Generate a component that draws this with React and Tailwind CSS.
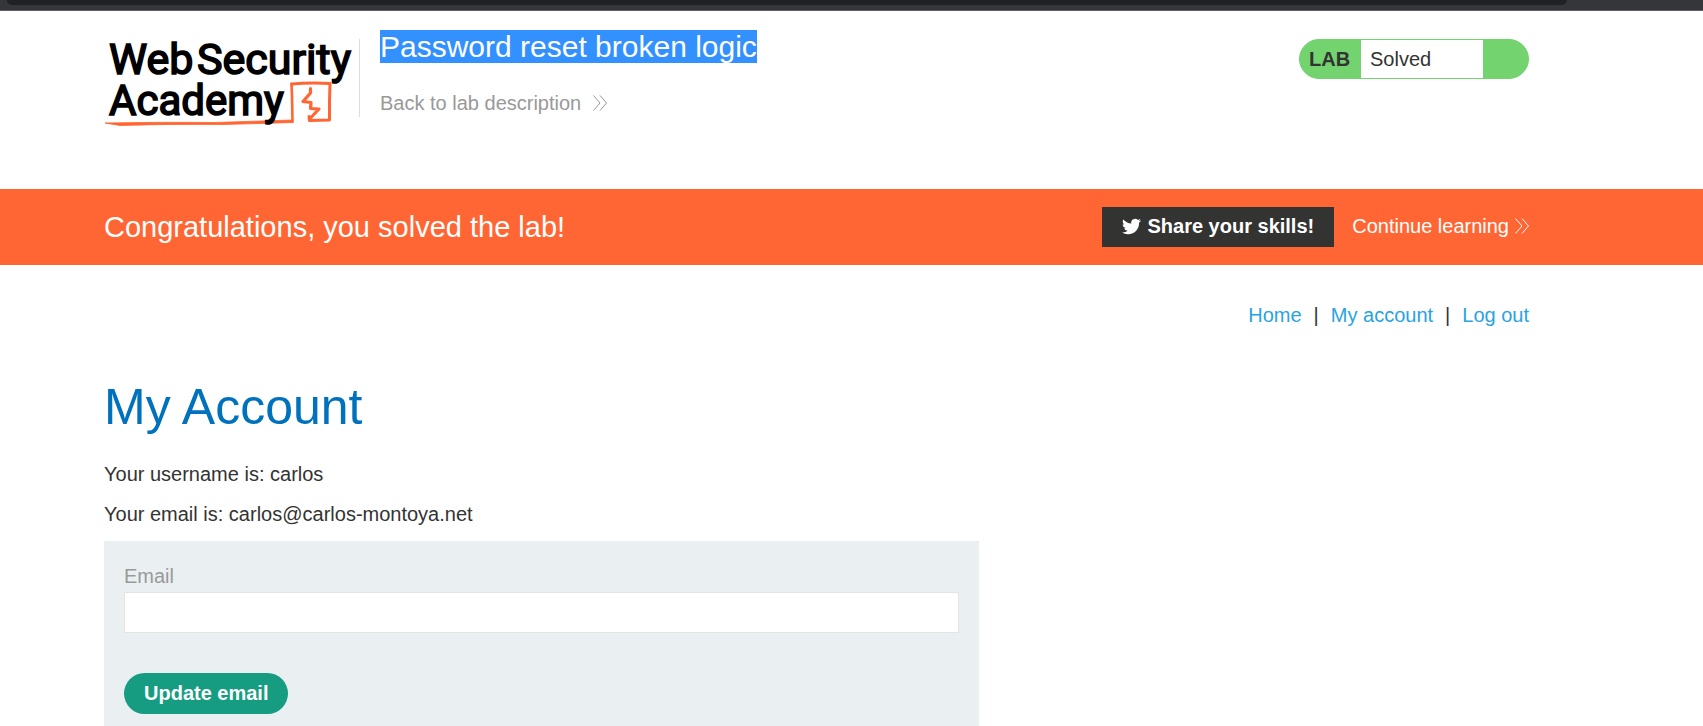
import React from "react";

function DoubleChevron({ className }) {
  return (
    <svg
      className={className}
      width="14"
      height="16"
      viewBox="0 0 14 16"
      fill="none"
      stroke="currentColor"
      strokeWidth="1"
      aria-hidden="true"
    >
      <path d="M0.5 0.5 L7 8 L0.5 15.5" />
      <path d="M7 0.5 L13.5 8 L7 15.5" />
    </svg>
  );
}

function TwitterBird() {
  return (
    <svg width="19" height="19" viewBox="0 0 24 24" fill="currentColor" aria-hidden="true">
      <path d="M23.953 4.57a10 10 0 01-2.825.775 4.958 4.958 0 002.163-2.723c-.951.555-2.005.959-3.127 1.184a4.92 4.92 0 00-8.384 4.482C7.69 8.095 4.067 6.13 1.64 3.162a4.822 4.822 0 00-.666 2.475c0 1.71.87 3.213 2.188 4.096a4.904 4.904 0 01-2.228-.616v.06a4.923 4.923 0 003.946 4.827 4.996 4.996 0 01-2.212.085 4.936 4.936 0 004.604 3.417 9.867 9.867 0 01-6.102 2.105c-.39 0-.779-.023-1.17-.067a13.995 13.995 0 007.557 2.209c9.053 0 13.998-7.496 13.998-13.985 0-.21 0-.42-.015-.63A9.935 9.935 0 0024 4.59z" />
    </svg>
  );
}

function Logo() {
  return (
    <svg width="252" height="104" viewBox="0 -6 252 104" aria-label="Web Security Academy">
      <g fill="none" stroke="#ff6633" strokeLinejoin="round" strokeLinecap="round">
        <path d="M188.500 85.500 L188 60 L187.500 48" strokeWidth="2.600" />
        <path d="M187.500 48 Q206 46.500 226 47.500 L225.500 65 L225.500 84 L205.500 84.500 L205 80.500" strokeWidth="3" />
        <path d="M206.500 52.500 L206.500 57 L199 65.500 L207 66.500 L206.500 72.500 L215 73 L205.500 83" strokeWidth="3.200" />
      </g>
      <path d="M1 87 Q60 86 110 86.500 L189 84 L189 86.500 L120 88.500 Q60 88 16 89.500 Z" fill="#ff6633" stroke="#ff6633" strokeWidth="0.800" />
      <g className="font-[Roboto,sans-serif] font-normal" fill="#000" stroke="#000" strokeWidth="1.600">
        <text x="5" y="38" className="text-[43px]">Web</text>
        <text x="93" y="38" className="text-[43px]">Security</text>
        <text x="5" y="79" className="text-[42px]">Academy</text>
      </g>
    </svg>
  );
}

function BrowserEdge() {
  return (
    <div className="h-[11px] border-b border-[#5f6063] bg-[#35363a] pl-[7px] pr-[136px]">
      <div className="h-[5px] rounded-b-xl bg-[#202124]" />
    </div>
  );
}

function Header() {
  return (
    <header className="flex h-[178px] w-full max-w-[1529px] items-start pl-[104px]">
      <a href="#academy" className="mt-[19px] block">
        <Logo />
      </a>
      <div className="ml-[3px] mt-7 h-[78px] w-px bg-[#dddddd]" />
      <div className="ml-5 mt-[19px]">
        <h2 className="text-[30px] leading-[33px] text-white">
          <span className="bg-[#3390ff]">Password reset broken logic</span>
        </h2>
        <a href="#description" className="mt-7 flex items-center text-[20px] leading-6 text-[#999999]">
          Back to lab description
          <DoubleChevron className="ml-3" />
        </a>
      </div>
      <div className="ml-auto mt-7 flex h-10 w-[230px] overflow-hidden rounded-[20px] border border-[#72d36f] bg-[#72d36f] text-[20px] leading-[38px] text-[#333332]">
        <span className="w-[61px] pl-[9px] font-bold">LAB</span>
        <span className="w-[122px] bg-white pl-[9px]">Solved</span>
      </div>
    </header>
  );
}

function Banner() {
  return (
    <section className="bg-[#ff6633] text-white">
      <div className="flex h-[76px] w-full max-w-[1529px] items-center pl-[104px]">
        <h4 className="text-[29px] leading-8">Congratulations, you solved the lab!</h4>
        <button
          type="button"
          className="ml-auto flex h-10 items-center gap-[6px] bg-[#333332] px-5 pb-[2px] text-[20px] font-bold"
        >
          <TwitterBird />
          Share your skills!
        </button>
        <a href="#continue" className="ml-[18px] flex items-center pb-[2px] text-[20px]">
          Continue learning
          <DoubleChevron className="ml-[6px]" />
        </a>
      </div>
    </section>
  );
}

function TopLinks() {
  return (
    <nav className="flex justify-end pt-[38px] text-[20px] leading-6 text-[#29a3e3]">
      <a href="#home">Home</a>
      <span className="px-3 text-[#333332]">|</span>
      <a href="#account">My account</a>
      <span className="px-3 text-[#333332]">|</span>
      <a href="#logout">Log out</a>
    </nav>
  );
}

function EmailForm() {
  return (
    <form className="mt-[15px] w-full max-w-[875px] bg-[#eaf0f2] px-5 pb-5 pt-[21px]" onSubmit={(e) => e.preventDefault()}>
      <label htmlFor="email" className="mb-[2px] block text-[20px] leading-7 text-[#999999]">
        Email
      </label>
      <input id="email" type="email" className="block h-[41px] w-full border border-[#e4e4e4] bg-white px-2 text-[20px] outline-none" />
      <button type="submit" className="mt-10 h-[41px] rounded-full bg-[#169c80] px-5 pb-[2px] text-[20px] font-bold text-white">
        Update email
      </button>
    </form>
  );
}

export default function App() {
  return (
    <div className="h-screen overflow-hidden bg-white font-['Liberation_Sans',Arial,sans-serif] text-[#333332]">
      <BrowserEdge />
      <Header />
      <Banner />
      <main className="w-full max-w-[1529px] pl-[104px]">
        <TopLinks />
        <h1 className="mt-[50px] text-[50px] leading-[60px] text-[#0071bc]">My Account</h1>
        <p className="mt-[25px] text-[20px] leading-6">Your username is: carlos</p>
        <p className="mt-4 text-[20px] leading-6">Your email is: carlos@carlos-montoya.net</p>
        <EmailForm />
      </main>
    </div>
  );
}
